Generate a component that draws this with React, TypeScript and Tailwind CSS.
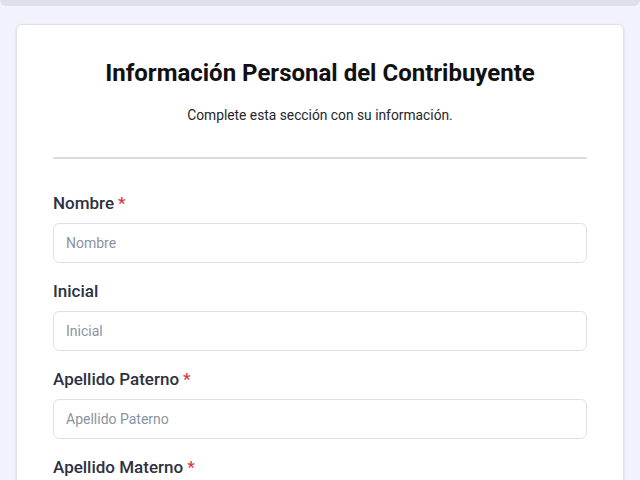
import React from 'react';

const FIELDS = [
    { label: 'Nombre', required: true },
    { label: 'Inicial', required: false },
    { label: 'Apellido Paterno', required: true },
    { label: 'Apellido Materno', required: true },
    { label: 'Número de Seguro Social', required: true },
];

export default function App() {
    return (
        <div className="min-h-screen bg-[#f1f2fc] font-['Roboto',sans-serif]">
            <div className="h-1.5 w-full rounded-b-md bg-[#dce0ea]" />
            <div className="px-4 pt-[18px]">
                <div className="rounded-md border border-[#e1e3ea] bg-white px-9 pt-8 pb-10 shadow-sm">
                    <h1 className="text-center text-2xl leading-8 font-bold text-[#111111]">
                        Información Personal del Contribuyente
                    </h1>
                    <p className="mt-4 text-center text-[13.8px] leading-5 text-[#24262c]">
                        Complete esta sección con su información.
                    </p>
                    <div className="mt-8 h-0.5 bg-[#dcdcdc]" />

                    <div className="mt-8 flex flex-col gap-4">
                        {FIELDS.map((f) => (
                            <div key={f.label}>
                                <label className="mb-2 block text-[17px] leading-6 font-medium text-[#2d3142]">
                                    {f.label}
                                    {f.required && <span className="ml-1 text-[#d9383f]">*</span>}
                                </label>
                                <input
                                    type="text"
                                    placeholder={f.label}
                                    className="h-10 w-full rounded-md border border-[#dde0e6] px-3 text-sm text-[#2d3142] placeholder:text-[#8a93a3] outline-none"
                                />
                            </div>
                        ))}
                    </div>
                </div>
            </div>
        </div>
    );
}
